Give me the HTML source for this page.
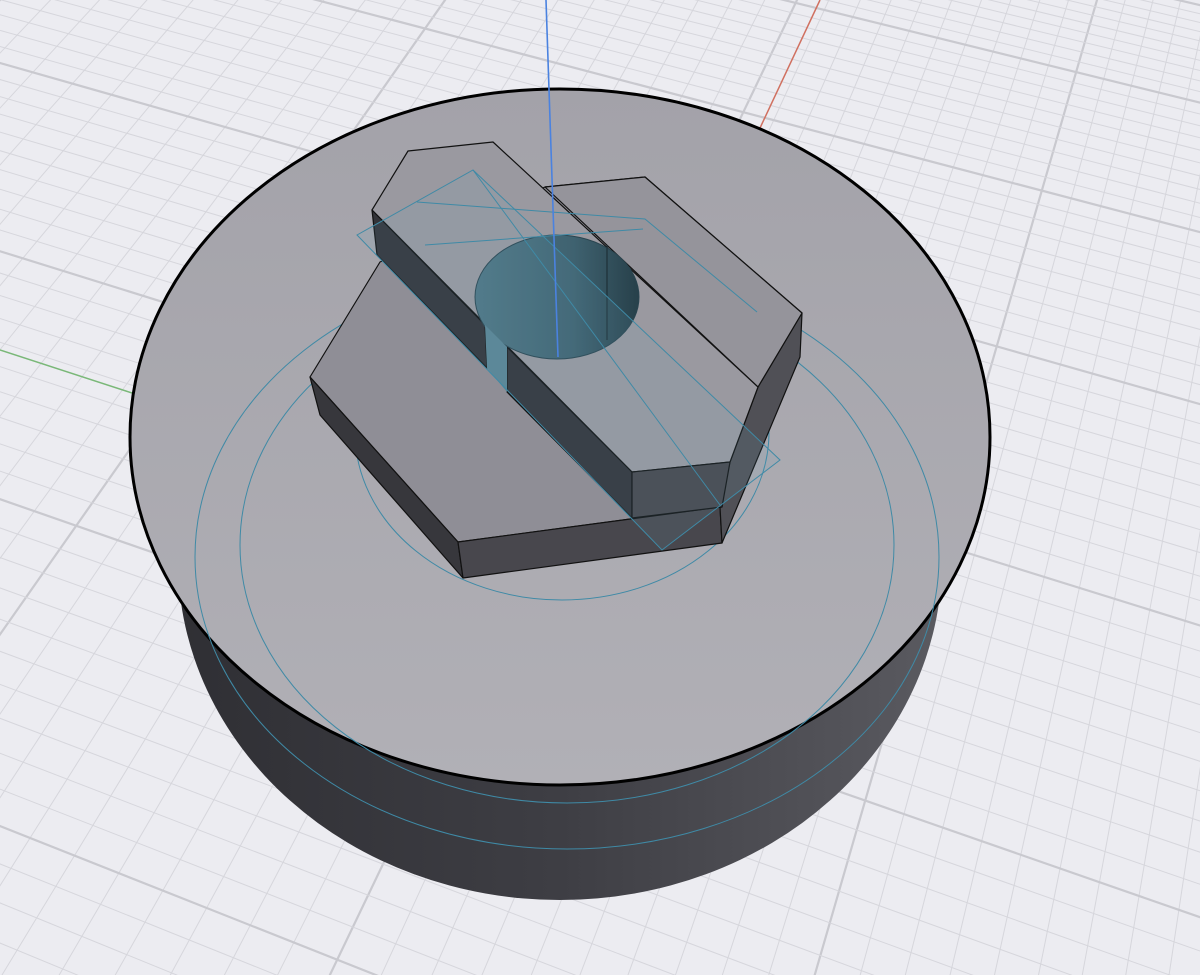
<!DOCTYPE html>
<html><head><meta charset="utf-8"><style>
html,body{margin:0;padding:0;width:1200px;height:975px;overflow:hidden;background:#ececf1}
svg{display:block;position:absolute;left:0;top:0}
</style></head><body>
<svg id="s" width="1200" height="975" viewBox="0 0 1200 975" xmlns="http://www.w3.org/2000/svg">
<defs>
<linearGradient id="side" x1="0" x2="1" y1="0" y2="0">
<stop offset="0" stop-color="#2f2f34"/><stop offset="0.5" stop-color="#3e3e44"/><stop offset="1" stop-color="#5a5a60"/>
</linearGradient>
<linearGradient id="top" x1="0" x2="0" y1="0" y2="1">
<stop offset="0" stop-color="#a3a2a9"/><stop offset="1" stop-color="#b1b0b6"/>
</linearGradient>
<linearGradient id="hole" x1="0" x2="1" y1="0" y2="0">
<stop offset="0" stop-color="#4f7684"/><stop offset="0.6" stop-color="#3f6270"/><stop offset="1" stop-color="#27404a"/>
</linearGradient>
</defs>
<g id="grid"></g>
<line x1="0" y1="350" x2="132" y2="393" stroke="#7ab878" stroke-width="1.5"/>
<line x1="820" y1="0" x2="760" y2="128" stroke="#d07060" stroke-width="1.5"/>
<ellipse cx="560" cy="560" rx="382" ry="340" fill="url(#side)"/>
<rect x="178" y="430" width="764" height="140" fill="url(#side)"/>
<ellipse cx="560" cy="437" rx="430" ry="348" fill="url(#top)" stroke="#000" stroke-width="3"/>
<g fill="none" stroke="#3f8aa6" stroke-width="1">
<ellipse cx="567" cy="557" rx="372" ry="292"/>
<ellipse cx="567" cy="545" rx="327" ry="258"/>
<ellipse cx="562" cy="432" rx="207" ry="168"/>
</g>
<g stroke="#111" stroke-width="1.2" stroke-linejoin="round">
<polygon points="310,377 380,262 545,187 645,177 802,313 758,387 730,462 720,507 458,542" fill="#8f8e96"/>
<polygon points="310,377 458,542 463,578 320,415" fill="#37373c"/>
<polygon points="458,542 720,507 722,543 463,578" fill="#48474d"/>
<polygon points="720,507 730,462 758,387 802,313 800,357 722,543" fill="#505056"/>
<polygon points="545,187 645,177 802,313 758,387" fill="#95949b"/>
<polygon points="372,210 408,151 493,142 758,387 730,462 632,472" fill="#9a99a0"/>
<polygon points="372,210 485,325 487,368 377,255" fill="#333338"/>
<polygon points="507,347 632,472 632,518 507,392" fill="#333338"/>
<polygon points="632,472 730,462 722,507 632,518" fill="#47464c"/>
</g>
<ellipse cx="557" cy="297" rx="82" ry="62" fill="url(#hole)" stroke="#2a4550" stroke-width="1"/>
<path d="M485,325 L487,368 L507,392 L507,347 Z" fill="#5b8594"/>
<line x1="607" y1="245" x2="607" y2="340" stroke="#1e3038" stroke-width="1.2"/>
<g fill="none" stroke="#3f8aa6" stroke-width="1">
<polygon points="357,235 473,170 780,460 662,550" fill="#6aa8c0" fill-opacity="0.12"/>
<polyline points="417,202 645,219 757,312"/>
<polyline points="425,245 643,229"/>
<line x1="473" y1="170" x2="720" y2="505"/>
</g>
<line x1="546" y1="0" x2="558" y2="357" stroke="#4a82e0" stroke-width="1.6"/>
</svg>
<script>
(function(){
var g=document.getElementById('grid'),h='';
function L(x1,y1,x2,y2,maj){h+='<line x1="'+x1.toFixed(1)+'" y1="'+y1.toFixed(1)+'" x2="'+x2.toFixed(1)+'" y2="'+y2.toFixed(1)+'" stroke="'+(maj?'#c9c9cf':'#d6d6dc')+'" stroke-width="'+(maj?2.2:1)+'"/>';}
var ax=1555,ay=-1582;
var a0=Math.atan2(0-ay,1097-ax);
var da=0.0165;
for(var k=-60;k<=60;k++){
  var a=a0+k*da;var dx=Math.cos(a),dy=Math.sin(a);
  if(dy<=0)continue;
  var t=(1200-ay)/dy*1.2;
  L(ax,ay,ax+dx*t,ay+dy*t,k%10==0);
}
var bx=-6810,by=-1873;
function lineB(y,maj){
  var s=(y-by)/(130-bx);
  L(-10,y+s*(-140),1210,y+s*(1080),maj);
}
function sp(y){return Math.max(6,18+(y-140)*0.028);}
var y=100,k=0;
while(y<1600){lineB(y,k%10==0);y+=sp(y);k++;}
y=100;k=0;
while(y>-400){y-=sp(y);k--;lineB(y,((k%10)+10)%10==0);}
g.innerHTML=h;
})();
</script>
</body></html>
